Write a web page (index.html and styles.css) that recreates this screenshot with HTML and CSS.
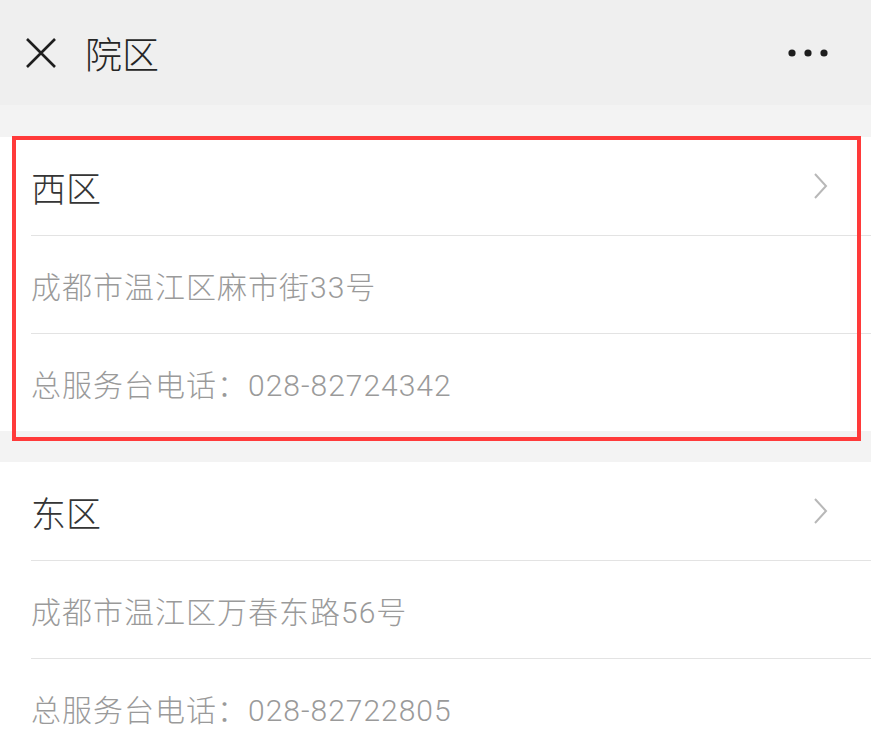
FILE: index.html
```html
<!DOCTYPE html>
<html>
<head>
    <meta charset="utf-8">
    <title>院区</title>
    <link rel="stylesheet" href="styles.css">
</head>
<body>
    <div class="navbar">
        <svg class="close" width="34" height="34" viewBox="0 0 34 34">
            <path d="M3 3 L31 31 M31 3 L3 31" stroke="#1e1e1e" stroke-width="2.6" fill="none"/>
        </svg>
        <span class="nav-title">院区</span>
        <svg class="more" width="42" height="10" viewBox="0 0 42 10">
            <circle cx="5" cy="5" r="3.6" fill="#1e1e1e"/>
            <circle cx="21" cy="5" r="3.6" fill="#1e1e1e"/>
            <circle cx="37" cy="5" r="3.6" fill="#1e1e1e"/>
        </svg>
    </div>

    <div class="campus first">
        <div class="row head">
            <span>西区</span>
            <svg class="arrow" width="16" height="28" viewBox="0 0 16 28">
                <path d="M2 2 L13 14 L2 26" stroke="#b8b8b8" stroke-width="2" fill="none"/>
            </svg>
        </div>
        <div class="row info">成都市温江区麻市街33号</div>
        <div class="row info">总服务台电话：028-82724342</div>
        <div class="mark"></div>
    </div>

    <div class="campus">
        <div class="row head">
            <span>东区</span>
            <svg class="arrow" width="16" height="28" viewBox="0 0 16 28">
                <path d="M2 2 L13 14 L2 26" stroke="#b8b8b8" stroke-width="2" fill="none"/>
            </svg>
        </div>
        <div class="row info">成都市温江区万春东路56号</div>
        <div class="row info">总服务台电话：028-82722805</div>
    </div>
</body>
</html>
```

FILE: styles.css
```css
body { margin: 0; background: #f3f3f3; font-family: "Liberation Sans", "Noto Sans CJK SC", sans-serif; overflow: hidden; }
.navbar { height: 105px; background: #efefef; display: flex; align-items: center; padding: 0 42px 0 24px; }
.close { margin-right: 27px; }
.nav-title { font-size: 37px; color: #262626; flex: 1; font-weight: 300; }
.campus { position: relative; background: #fff; margin-top: 32px; }
.campus.first { margin-top: 32px; margin-bottom: -1px; }
.row { height: 97px; margin-left: 31px; display: flex; align-items: center; border-top: 1px solid #e3e3e3; }
.row:first-child { border-top: none; height: 98px; }
.head { font-size: 35px; color: #353535; justify-content: space-between; padding-right: 42px; font-weight: 300; }
.info { font-family: Roboto, "Noto Sans CJK SC", sans-serif; font-size: 30px; color: #9a9a9a; letter-spacing: 1px; font-weight: 300; }
.mark { position: absolute; left: 12px; right: 10px; top: -1px; bottom: -10px; border: 4px solid #ff3a3a; pointer-events: none; }
```
